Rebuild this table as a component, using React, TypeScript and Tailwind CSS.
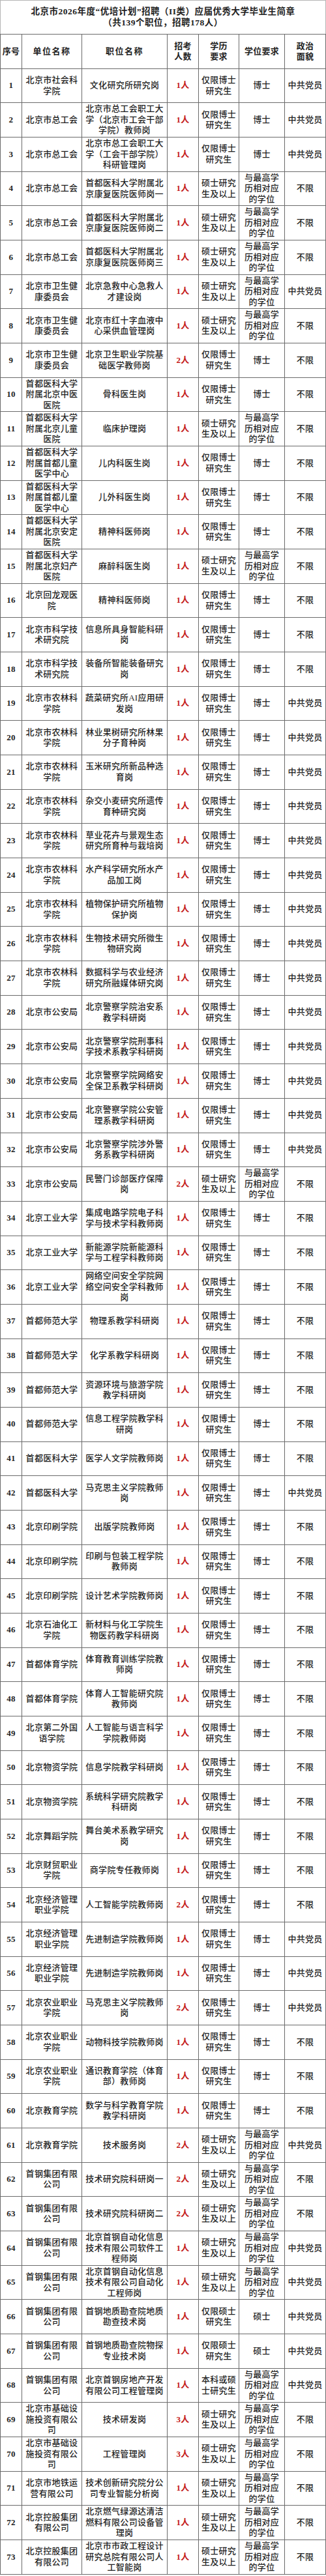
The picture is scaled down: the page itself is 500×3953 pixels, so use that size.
import React from 'react';

const A = '仅限博士研究生';
const B = '硕士研究生及以上';
const C = '仅限硕士研究生';
const D = '本科或硕士研究生';
const X = '与最高学历相对应的学位';
const P = '中共党员';
const N = '不限';

type Row = [string, string, number, string, string, string];

const rows: Row[] = [
  ['北京市社会科学院', '文化研究所研究岗', 1, A, '博士', P],
  ['北京市总工会', '北京市总工会职工大学（北京市工会干部学院）教师岗', 1, A, '博士', P],
  ['北京市总工会', '北京市总工会职工大学（工会干部学院）科研管理岗', 1, A, '博士', P],
  ['北京市总工会', '首都医科大学附属北京康复医院医师岗一', 1, B, X, N],
  ['北京市总工会', '首都医科大学附属北京康复医院医师岗二', 1, B, X, N],
  ['北京市总工会', '首都医科大学附属北京康复医院医师岗三', 1, B, X, N],
  ['北京市卫生健康委员会', '北京急救中心急救人才建设岗', 1, B, X, P],
  ['北京市卫生健康委员会', '北京市红十字血液中心采供血管理岗', 1, B, X, N],
  ['北京市卫生健康委员会', '北京卫生职业学院基础医学教师岗', 2, A, '博士', N],
  ['首都医科大学附属北京中医医院', '骨科医生岗', 1, A, '博士', N],
  ['首都医科大学附属北京儿童医院', '临床护理岗', 1, B, X, N],
  ['首都医科大学附属首都儿童医学中心', '儿内科医生岗', 1, A, '博士', N],
  ['首都医科大学附属首都儿童医学中心', '儿外科医生岗', 1, A, '博士', N],
  ['首都医科大学附属北京安定医院', '精神科医师岗', 1, A, '博士', N],
  ['首都医科大学附属北京妇产医院', '麻醉科医生岗', 1, B, X, N],
  ['北京回龙观医院', '精神科医师岗', 1, A, '博士', N],
  ['北京市科学技术研究院', '信息所具身智能科研岗', 1, A, '博士', N],
  ['北京市科学技术研究院', '装备所智能装备研究岗', 1, A, '博士', N],
  ['北京市农林科学院', '蔬菜研究所AI应用研发岗', 1, A, '博士', P],
  ['北京市农林科学院', '林业果树研究所林果分子育种岗', 1, A, '博士', P],
  ['北京市农林科学院', '玉米研究所新品种选育岗', 1, A, '博士', P],
  ['北京市农林科学院', '杂交小麦研究所遗传育种研究岗', 1, A, '博士', P],
  ['北京市农林科学院', '草业花卉与景观生态研究所育种与栽培岗', 1, A, '博士', P],
  ['北京市农林科学院', '水产科学研究所水产品加工岗', 1, A, '博士', P],
  ['北京市农林科学院', '植物保护研究所植物保护岗', 1, A, '博士', P],
  ['北京市农林科学院', '生物技术研究所微生物研究岗', 1, A, '博士', P],
  ['北京市农林科学院', '数据科学与农业经济研究所融媒体研究岗', 1, A, '博士', P],
  ['北京市公安局', '北京警察学院治安系教学科研岗', 1, A, '博士', P],
  ['北京市公安局', '北京警察学院刑事科学技术系教学科研岗', 1, A, '博士', P],
  ['北京市公安局', '北京警察学院网络安全保卫系教学科研岗', 1, A, '博士', P],
  ['北京市公安局', '北京警察学院公安管理系教学科研岗', 1, A, '博士', P],
  ['北京市公安局', '北京警察学院涉外警务系教学科研岗', 1, A, '博士', P],
  ['北京市公安局', '民警门诊部医疗保障岗', 2, B, X, N],
  ['北京工业大学', '集成电路学院电子科学与技术学科教师岗', 1, A, '博士', N],
  ['北京工业大学', '新能源学院新能源科学与工程学科教师岗', 1, A, '博士', N],
  ['北京工业大学', '网络空间安全学院网络空间安全学科教师岗', 1, A, '博士', N],
  ['首都师范大学', '物理系教学科研岗', 1, A, '博士', N],
  ['首都师范大学', '化学系教学科研岗', 1, A, '博士', N],
  ['首都师范大学', '资源环境与旅游学院教学科研岗', 1, A, '博士', N],
  ['首都师范大学', '信息工程学院教学科研岗', 1, A, '博士', N],
  ['首都医科大学', '医学人文学院教师岗', 1, A, '博士', N],
  ['首都医科大学', '马克思主义学院教师岗', 1, A, '博士', P],
  ['北京印刷学院', '出版学院教师岗', 1, A, '博士', N],
  ['北京印刷学院', '印刷与包装工程学院教师岗', 1, A, '博士', N],
  ['北京印刷学院', '设计艺术学院教师岗', 1, A, '博士', N],
  ['北京石油化工学院', '新材料与化工学院生物医药教学科研岗', 1, A, '博士', N],
  ['首都体育学院', '体育教育训练学院教师岗', 1, A, '博士', N],
  ['首都体育学院', '体育人工智能研究院教师岗', 1, A, '博士', N],
  ['北京第二外国语学院', '人工智能与语言科学学院教师岗', 1, A, '博士', N],
  ['北京物资学院', '信息学院教学科研岗', 1, A, '博士', N],
  ['北京物资学院', '系统科学研究院教学科研岗', 1, A, '博士', N],
  ['北京舞蹈学院', '舞台美术系教学研究岗', 1, A, '博士', N],
  ['北京财贸职业学院', '商学院专任教师岗', 1, A, '博士', N],
  ['北京经济管理职业学院', '人工智能学院教师岗', 2, A, '博士', N],
  ['北京经济管理职业学院', '先进制造学院教师岗', 1, A, '博士', P],
  ['北京经济管理职业学院', '先进制造学院教师岗', 1, A, '博士', P],
  ['北京农业职业学院', '马克思主义学院教师岗', 2, A, '博士', P],
  ['北京农业职业学院', '动物科技学院教师岗', 1, A, '博士', N],
  ['北京农业职业学院', '通识教育学院（体育部）教师岗', 1, A, '博士', N],
  ['北京教育学院', '数学与科学教育学院教学科研岗', 1, A, '博士', N],
  ['北京教育学院', '技术服务岗', 2, B, X, P],
  ['首钢集团有限公司', '技术研究院科研岗一', 2, B, X, N],
  ['首钢集团有限公司', '技术研究院科研岗二', 2, B, X, N],
  ['首钢集团有限公司', '北京首钢自动化信息技术有限公司软件工程师岗', 1, B, X, P],
  ['首钢集团有限公司', '北京首钢自动化信息技术有限公司自动化工程师岗', 1, B, X, P],
  ['首钢集团有限公司', '首钢地质勘查院地质勘查技术岗', 1, C, '硕士', P],
  ['首钢集团有限公司', '首钢地质勘查院物探专业技术岗', 1, C, '硕士', P],
  ['首钢集团有限公司', '北京首钢房地产开发有限公司工程管理岗', 1, D, X, P],
  ['北京市基础设施投资有限公司', '技术研发岗', 3, B, X, N],
  ['北京市基础设施投资有限公司', '工程管理岗', 3, B, X, N],
  ['北京市地铁运营有限公司', '技术创新研究院分公司专业智能分析岗', 1, B, X, N],
  ['北京控股集团有限公司', '北京燃气绿源达清洁燃料有限公司设备管理岗', 1, B, X, N],
  ['北京控股集团有限公司', '北京市市政工程设计研究总院有限公司人工智能岗', 1, B, X, N],
];

const cell =
  'flex items-center justify-center text-center border-r border-b border-[#6b6b6b] text-[13px] leading-[16.5px] tracking-[0.3px]';

export default function App() {
  return (
    <div className="w-[500px] bg-white font-['Liberation_Serif','Noto_Sans_CJK_SC',serif] text-[#1f1f1f]">
      {/* title */}
      <div className="h-[52px] border-x border-t border-[#b5b5b5] flex flex-col items-center justify-center font-bold text-[13.5px] leading-[16.5px] tracking-[0.5px] text-[#222]">
        <div>北京市2026年度“优培计划”招聘（II类）应届优秀大学毕业生简章</div>
        <div>（共139个职位，招聘178人）</div>
      </div>

      <div className="grid grid-cols-[33px_92px_131px_48px_62px_70px_63px] auto-rows-[52.68px] border-l border-t border-[#6b6b6b]">
        {/* header */}
        <div className={`${cell} h-[53.4px] font-bold text-[#222]`}>序号</div>
        <div className={`${cell} h-[53.4px] font-bold text-[#222] tracking-[1.5px]`}>单位名称</div>
        <div className={`${cell} h-[53.4px] font-bold text-[#222] tracking-[1.5px]`}>职位名称</div>
        <div className={`${cell} h-[53.4px] font-bold text-[#222]`}>
          招考
          <br />
          人数
        </div>
        <div className={`${cell} h-[53.4px] font-bold text-[#222]`}>
          学历
          <br />
          要求
        </div>
        <div className={`${cell} h-[53.4px] font-bold text-[#222]`}>学位要求</div>
        <div className={`${cell} h-[53.4px] font-bold text-[#222]`}>
          政治
          <br />
          面貌
        </div>

        {rows.map((r, i) => (
          <React.Fragment key={i}>
            <div className={`${cell} font-bold`}>{i + 1}</div>
            <div className={`${cell} px-[5px] font-medium`}>{r[0]}</div>
            <div className={`${cell} px-[4px] font-medium`}>{r[1]}</div>
            <div className={`${cell} font-bold text-[#c41a1a]`}>{r[2]}人</div>
            <div className={`${cell} px-[3px] font-medium`}>{r[3]}</div>
            <div className={`${cell} px-[6px] font-medium`}>{r[4]}</div>
            <div className={`${cell} px-[2px] font-medium`}>{r[5]}</div>
          </React.Fragment>
        ))}
      </div>
    </div>
  );
}
